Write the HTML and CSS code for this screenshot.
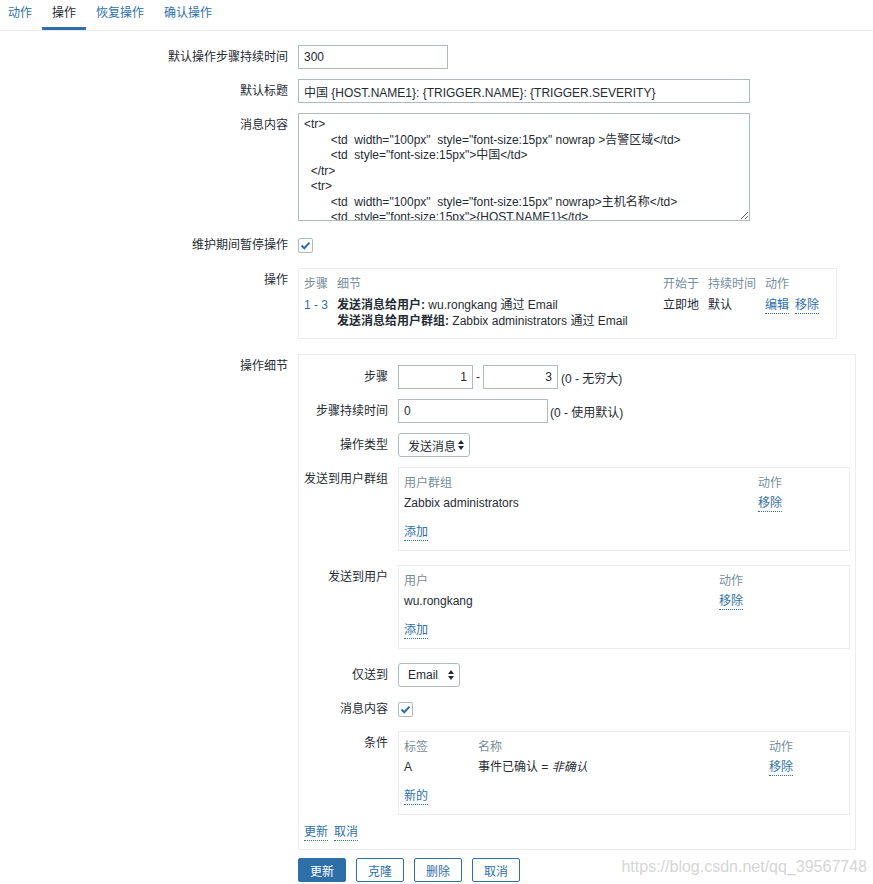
FILE: index.html
```html
<!DOCTYPE html>
<html lang="zh-CN">
<head>
    <meta charset="UTF-8">
    <meta name="viewport" content="width=device-width, initial-scale=1.0">
    <title>操作</title>
    <link rel="stylesheet" href="styles.css">
</head>
<body>
    <div class="tabs">
        <a class="tab first">动作</a>
        <a class="tab active">操作</a>
        <a class="tab">恢复操作</a>
        <a class="tab">确认操作</a>
    </div>

    <form class="form">
        <div class="row">
            <label class="label">默认操作步骤持续时间</label>
            <div class="field"><input class="input w150" value="300"></div>
        </div>
        <div class="row">
            <label class="label">默认标题</label>
            <div class="field"><input class="input w452" value="中国 {HOST.NAME1}: {TRIGGER.NAME}: {TRIGGER.SEVERITY}"></div>
        </div>
        <div class="row">
            <label class="label">消息内容</label>
            <div class="field">
<textarea class="textarea"><tr>
        <td  width="100px"  style="font-size:15px" nowrap >告警区域</td>
        <td  style="font-size:15px">中国</td>
  </tr>
  <tr>
        <td  width="100px"  style="font-size:15px" nowrap>主机名称</td>
        <td  style="font-size:15px">{HOST.NAME1}</td>
  </tr>
  <tr>
        <td  width="100px"  style="font-size:15px" nowrap>告警时间</td>
        <td  style="font-size:15px">{EVENT.DATE} {EVENT.TIME}</td>
  </tr></textarea>
            </div>
        </div>
        <div class="row check-row">
            <label class="label">维护期间暂停操作</label>
            <div class="field center"><span class="checkbox"><svg width="15" height="15" viewBox="0 0 15 15"><polyline points="3.5,7.5 6.3,10.2 11.5,4.6" fill="none" stroke="#2f6fa8" stroke-width="2"/></svg></span></div>
        </div>
        <div class="row ops-row">
            <label class="label">操作</label>
            <div class="field">
                <div class="box ops-box">
                    <table class="list-table ops-table">
                        <tr>
                            <th class="shrink">步骤</th>
                            <th>细节</th>
                            <th class="shrink">开始于</th>
                            <th class="shrink">持续时间</th>
                            <th class="shrink last">动作</th>
                        </tr>
                        <tr>
                            <td class="steps">1 - 3</td>
                            <td class="details"><b>发送消息给用户:</b> wu.rongkang 通过 Email<br><b>发送消息给用户群组:</b> Zabbix administrators 通过 Email</td>
                            <td>立即地</td>
                            <td>默认</td>
                            <td class="last"><a class="link">编辑</a><a class="link">移除</a></td>
                        </tr>
                    </table>
                </div>
            </div>
        </div>
        <div class="row details-row">
            <label class="label">操作细节</label>
            <div class="field">
                <div class="box details-box">
                    <div class="sub-row">
                        <label class="sub-label">步骤</label>
                        <div class="field inline">
                            <input class="input num" value="1"><span>-</span><input class="input num" value="3"><span>(0 - 无穷大)</span>
                        </div>
                    </div>
                    <div class="sub-row">
                        <label class="sub-label">步骤持续时间</label>
                        <div class="field inline tight">
                            <input class="input w150" value="0"><span>(0 - 使用默认)</span>
                        </div>
                    </div>
                    <div class="sub-row">
                        <label class="sub-label">操作类型</label>
                        <div class="field">
                            <div class="select w72"><span>发送消息</span><svg width="6" height="10" viewBox="0 0 6 10"><path d="M0 4 L3 0 L6 4 Z M0 6 L3 10 L6 6 Z" fill="#1f2c33"/></svg></div>
                        </div>
                    </div>
                    <div class="sub-row box-row">
                        <label class="sub-label">发送到用户群组</label>
                        <div class="field">
                            <div class="box">
                                <table class="list-table">
                                    <tr><th>用户群组</th><th class="act-86">动作</th></tr>
                                    <tr><td>Zabbix administrators</td><td><a class="link">移除</a></td></tr>
                                    <tr><td class="add" colspan="2"><a class="link">添加</a></td></tr>
                                </table>
                            </div>
                        </div>
                    </div>
                    <div class="sub-row box-row">
                        <label class="sub-label">发送到用户</label>
                        <div class="field">
                            <div class="box">
                                <table class="list-table">
                                    <tr><th>用户</th><th class="act-125">动作</th></tr>
                                    <tr><td>wu.rongkang</td><td><a class="link">移除</a></td></tr>
                                    <tr><td class="add" colspan="2"><a class="link">添加</a></td></tr>
                                </table>
                            </div>
                        </div>
                    </div>
                    <div class="sub-row">
                        <label class="sub-label">仅送到</label>
                        <div class="field">
                            <div class="select w62"><span>Email</span><svg width="6" height="10" viewBox="0 0 6 10"><path d="M0 4 L3 0 L6 4 Z M0 6 L3 10 L6 6 Z" fill="#1f2c33"/></svg></div>
                        </div>
                    </div>
                    <div class="sub-row">
                        <label class="sub-label">消息内容</label>
                        <div class="field center"><span class="checkbox"><svg width="15" height="15" viewBox="0 0 15 15"><polyline points="3.5,7.5 6.3,10.2 11.5,4.6" fill="none" stroke="#2f6fa8" stroke-width="2"/></svg></span></div>
                    </div>
                    <div class="sub-row">
                        <label class="sub-label">条件</label>
                        <div class="field">
                            <div class="box">
                                <table class="list-table">
                                    <tr><th class="tag-col">标签</th><th>名称</th><th class="act-75">动作</th></tr>
                                    <tr><td>A</td><td>事件已确认 = <i>非确认</i></td><td><a class="link">移除</a></td></tr>
                                    <tr><td class="add" colspan="3"><a class="link">新的</a></td></tr>
                                </table>
                            </div>
                        </div>
                    </div>
                    <div class="box-links"><a class="link">更新</a><a class="link">取消</a></div>
                </div>
            </div>
        </div>

        <div class="buttons">
            <button type="button" class="btn primary">更新</button>
            <button type="button" class="btn">克隆</button>
            <button type="button" class="btn">删除</button>
            <button type="button" class="btn">取消</button>
            <span class="watermark">https://blog.csdn.net/qq_39567748</span>
        </div>
    </form>
</body>
</html>
```

FILE: styles.css
```css
body {
    margin: 0;
    font-family: "Liberation Sans", Arial, "Noto Sans CJK SC", sans-serif;
    font-size: 12px;
    color: #1f2c33;
    background-color: #fff;
}

.tabs {
    display: flex;
    border-bottom: 1px solid #ebeef0;
}

.tab {
    padding: 0 10px;
    line-height: 27px;
    border-bottom: 3px solid transparent;
    color: #2f6fa8;
    cursor: pointer;
}

.tab.first {
    padding-left: 8px;
}

.tab.active {
    color: #1f2c33;
    border-bottom-color: #2f6fa8;
}

.form {
    padding-top: 14px;
    position: relative;
}

.row {
    display: flex;
    margin-bottom: 10px;
}

.label {
    width: 298px;
    flex-shrink: 0;
    box-sizing: border-box;
    padding: 5px 10px 0 0;
    line-height: 14px;
    text-align: right;
}

.field {
    flex: 1;
    min-width: 0;
}

.field.center {
    display: flex;
    align-items: center;
    height: 24px;
}

.input {
    box-sizing: border-box;
    height: 24px;
    border: 1px solid #acbbc2;
    padding: 0 5px;
    font: inherit;
    color: #1f2c33;
    background-color: #fff;
    display: block;
}

.w150 { width: 150px; }
.w452 { width: 452px; }

.textarea {
    display: block;
    box-sizing: border-box;
    width: 452px;
    height: 108px;
    border: 1px solid #acbbc2;
    padding: 3px 5px;
    font: inherit;
    line-height: 15.5px;
    color: #1f2c33;
    overflow-y: scroll;
    white-space: pre;
    margin: 0;
}

.textarea::-webkit-scrollbar {
    width: 10px;
}

.textarea::-webkit-scrollbar-track {
    background-color: #fafafa;
    border-left: 1px solid #e8e8e8;
}

.textarea::-webkit-scrollbar-thumb {
    background-color: #c1c1c1;
    border: 1px solid #fafafa;
    border-right-width: 2px;
}

.check-row {
    padding-top: 2px;
    margin-bottom: 11px;
}

.checkbox {
    display: block;
    width: 15px;
    height: 15px;
    box-sizing: border-box;
    border: 1px solid #acbbc2;
    border-radius: 2px;
    position: relative;
}

.checkbox svg {
    position: absolute;
    left: -1px;
    top: -1px;
}

.box {
    border: 1px solid #ebeef0;
    padding: 5px;
    box-sizing: border-box;
}

.ops-row {
    margin-bottom: 15px;
}

.ops-box {
    width: 539px;
    padding-bottom: 6px;
}

.details-row {
    margin-bottom: 0;
}

.details-box {
    width: 558px;
    padding: 10px 5px;
}

.list-table {
    width: 100%;
    border-collapse: collapse;
}

.list-table th {
    color: #768d99;
    font-weight: normal;
    text-align: left;
    padding: 3px 5px 3px 0;
    line-height: 14px;
    box-sizing: border-box;
}

.list-table td {
    padding: 3px 5px 3px 0;
    line-height: 14px;
    vertical-align: top;
    white-space: nowrap;
}

.list-table td.add {
    padding: 12px 0 6px;
}

.ops-table th,
.ops-table td {
    padding-right: 9px;
}

.ops-table th.last,
.ops-table td.last {
    padding-right: 12px;
}

.ops-table td {
    line-height: 16px;
}

.ops-table .shrink {
    width: 1%;
    white-space: nowrap;
}

.steps {
    color: #2f6fa8;
}

.details b {
    font-weight: bold;
}

.act-86 { width: 86px; }
.act-125 { width: 125px; }
.act-75 { width: 75px; }
.tag-col { width: 74px; }

.link {
    color: #2f6fa8;
    text-decoration: none;
    border-bottom: 1px dotted #2f6fa8;
    padding-bottom: 1px;
    cursor: pointer;
}

.link + .link {
    margin-left: 6px;
}

.sub-row {
    display: flex;
    margin-bottom: 10px;
}

.sub-row.box-row {
    margin-bottom: 14px;
}

.sub-label {
    width: 94px;
    flex-shrink: 0;
    box-sizing: border-box;
    padding: 5px 10px 0 0;
    line-height: 14px;
    text-align: right;
}

.field.inline {
    display: flex;
    align-items: center;
    gap: 3px;
}

.field.inline.tight {
    gap: 2px;
}

.input.num {
    width: 75px;
    text-align: right;
}

.select {
    box-sizing: border-box;
    height: 24px;
    border: 1px solid #acbbc2;
    border-radius: 3px;
    padding: 0 5px 0 9px;
    display: flex;
    align-items: center;
    justify-content: space-between;
    background-color: #fff;
}

.w72 { width: 72px; }
.w62 { width: 62px; }

.box-links {
    line-height: 14px;
}

.buttons {
    display: flex;
    gap: 10px;
    margin: 8px 0 0 298px;
}

.btn {
    width: 48px;
    height: 24px;
    padding: 0;
    font: inherit;
    color: #2f6fa8;
    background-color: #fff;
    border: 1px solid #2f6fa8;
    border-radius: 2px;
    cursor: pointer;
}

.btn.primary {
    color: #fff;
    background-color: #2f6fa8;
}

.watermark {
    position: absolute;
    right: 6px;
    bottom: 6px;
    font-size: 16px;
    color: #d5d5d5;
}
```
